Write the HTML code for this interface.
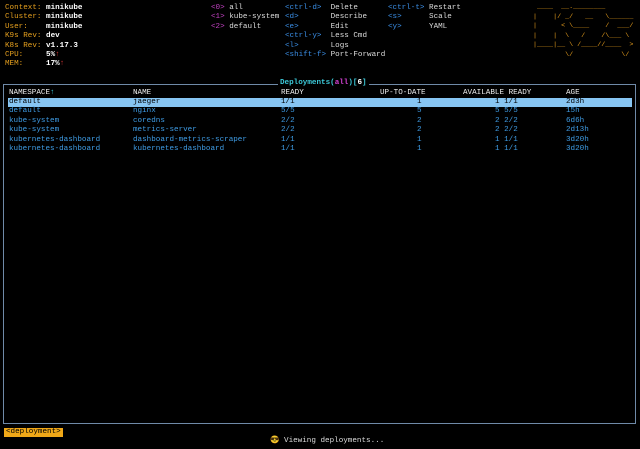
<!DOCTYPE html>
<html><head><meta charset="utf-8"><style>
html,body{margin:0;padding:0;background:#000;width:640px;height:449px;overflow:hidden}
body{font-family:"Liberation Mono","DejaVu Sans Mono",monospace;font-size:7.6px;line-height:9.4px;color:#fff;position:relative}
.a{position:absolute;white-space:pre}
.o{color:#e6a01e}.w{color:#fff;font-weight:bold}.m{color:#c040c0}.b{color:#3a8ee6}.g{color:#ddd}
.t{color:#3f9de6}.h{color:#eee}
#box{position:absolute;left:3px;top:84px;width:631px;height:338px;border:1px solid #6f8aa8;}
#sel{position:absolute;left:8px;top:98px;width:624px;height:9px;background:#87c5f2}
#logo{color:#e39b1c;font-size:6.7px;line-height:9.6px;position:absolute;left:533px;top:3px;white-space:pre}
</style></head><body>
<div class="a o" style="left:5px;top:4px">Context: <span class="w">minikube</span>
Cluster: <span class="w">minikube</span>
User:    <span class="w">minikube</span>
K9s Rev: <span class="w">dev</span>
K8s Rev: <span class="w">v1.17.3</span>
CPU:     <span class="w">5%</span><span style="color:#c33">↑</span>
MEM:     <span class="w">17%</span><span style="color:#c33">↑</span></div>
<div class="a m" style="left:211px;top:4px">&lt;0&gt; <span class="g">all</span>
&lt;1&gt; <span class="g">kube-system</span>
&lt;2&gt; <span class="g">default</span></div>
<div class="a b" style="left:285px;top:4px">&lt;ctrl-d&gt;  <span class="g">Delete</span>
&lt;d&gt;       <span class="g">Describe</span>
&lt;e&gt;       <span class="g">Edit</span>
&lt;ctrl-y&gt;  <span class="g">Less Cmd</span>
&lt;l&gt;       <span class="g">Logs</span>
&lt;shift-f&gt; <span class="g">Port-Forward</span></div>
<div class="a b" style="left:388px;top:4px">&lt;ctrl-t&gt; <span class="g">Restart</span>
&lt;s&gt;      <span class="g">Scale</span>
&lt;y&gt;      <span class="g">YAML</span></div>
<div id="logo"> ____  __.________       
|    |/ _/   __   \______
|      &lt; \____    /  ___/
|    |  \   /    /\___ \ 
|____|__ \ /____//____  &gt;
        \/            \/ </div>
<div id="box"></div>
<div class="a" style="left:278px;top:79px;background:#000;padding:0 2px;color:#3cc8d8;font-weight:bold">Deployments(<span style="color:#d040d0">all</span>)[<span class="w">6</span>]</div>
<div id="sel"></div>
<div class="a h" style="left:9px;top:89px">NAMESPACE<span style="color:#3cc8d8">↑</span></div>
<div class="a h" style="left:133px;top:89px">NAME</div>
<div class="a h" style="left:281px;top:89px">READY</div>
<div class="a h" style="left:380px;top:89px">UP-TO-DATE</div>
<div class="a h" style="left:463px;top:89px">AVAILABLE READY</div>
<div class="a h" style="left:566px;top:89px">AGE</div>
<div class="a t" style="left:9px;top:98px"><span style="color:#000">default</span>
default
kube-system
kube-system
kubernetes-dashboard
kubernetes-dashboard</div>
<div class="a t" style="left:133px;top:98px"><span style="color:#000">jaeger</span>
nginx
coredns
metrics-server
dashboard-metrics-scraper
kubernetes-dashboard</div>
<div class="a t" style="left:281px;top:98px"><span style="color:#000">1/1</span>
5/5
2/2
2/2
1/1
1/1</div>
<div class="a t" style="left:417px;top:98px"><span style="color:#000">1</span>
5
2
2
1
1</div>
<div class="a t" style="left:495px;top:98px"><span style="color:#000">1 1/1</span>
5 5/5
2 2/2
2 2/2
1 1/1
1 1/1</div>
<div class="a t" style="left:566px;top:98px"><span style="color:#000">2d3h</span>
15h
6d6h
2d13h
3d20h
3d20h</div>
<div class="a" style="left:4px;top:428px;background:#f0a818;color:#000;padding:0 2px;height:9px;line-height:9px">&lt;deployment&gt;</div>
<div class="a" style="left:270px;top:437px;color:#ddd">😎 Viewing deployments...</div>
</body></html>
